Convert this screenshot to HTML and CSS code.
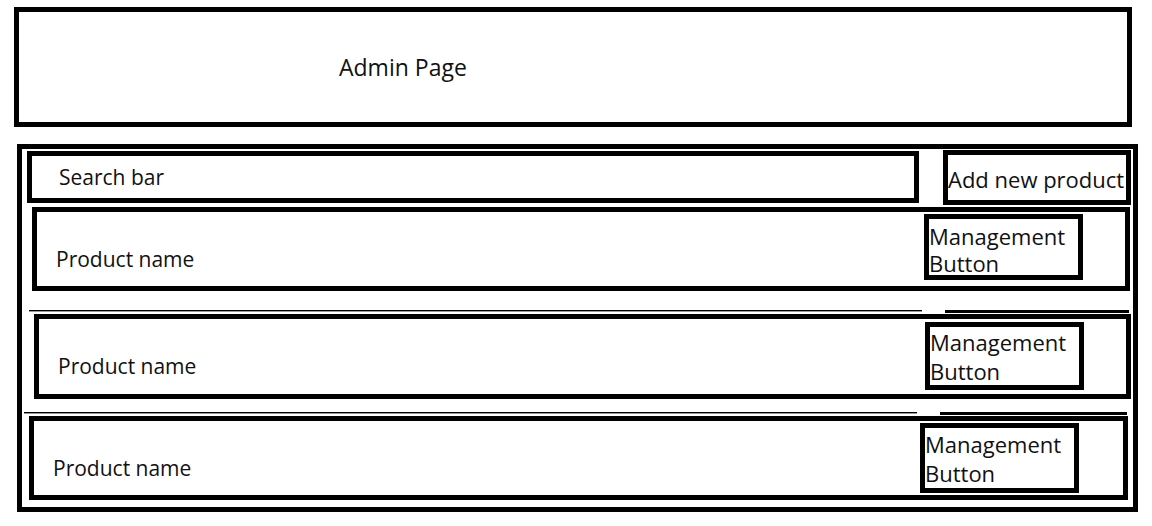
FILE: index.html
```html
<!DOCTYPE html>
<html lang="en">
<head>
<meta charset="utf-8">
<title>Admin Page</title>
<link rel="stylesheet" href="styles.css">
</head>
<body>
  <header class="header">
    <h1 class="header-title">Admin Page</h1>
  </header>
  <main class="panel">
    <div class="toolbar">
      <div class="search">Search bar</div>
      <button class="add-btn" type="button">Add new product</button>
    </div>
    <div class="row row--1">
      <span class="row-name">Product name</span>
      <button class="manage-btn manage-btn--1" type="button">Management Button</button>
    </div>
    <div class="divider divider--1">
      <span class="divider-thin"></span>
      <span class="divider-thick"></span>
    </div>
    <div class="row row--2">
      <span class="row-name">Product name</span>
      <button class="manage-btn manage-btn--2" type="button">Management Button</button>
    </div>
    <div class="divider divider--2">
      <span class="divider-thin"></span>
      <span class="divider-thick"></span>
    </div>
    <div class="row row--3">
      <span class="row-name">Product name</span>
      <button class="manage-btn manage-btn--3" type="button">Management Button</button>
    </div>
  </main>
</body>
</html>
```

FILE: styles.css
```css
* {
  box-sizing: border-box;
}

html, body {
  margin: 0;
  padding: 0;
  background: #ffffff;
}

body {
  width: 1152px;
  height: 526px;
  overflow: hidden;
  font-family: "Open Sans", "Liberation Sans", sans-serif;
  font-size: 21px;
  color: #111111;
}

button {
  font: inherit;
  color: inherit;
  background: #ffffff;
  text-align: left;
  cursor: pointer;
}

/* ---------- header ---------- */
.header {
  margin: 7px 20px 0 14px;
  height: 120px;
  border: 5px solid #000;
  display: flex;
  align-items: center;
  padding-left: 320px;
}

.header-title {
  margin: 0;
  font-size: 23px;
  font-weight: 400;
  line-height: 30px;
}

/* ---------- main panel ---------- */
.panel {
  margin: 17px 0 0 17px;
  width: 1121px;
  height: 368px;
  border: 5px solid #000;
  display: flex;
  flex-direction: column;
}

.toolbar {
  display: flex;
  align-items: flex-start;
  padding-left: 5px;
}

.search {
  margin-top: 2px;
  width: 892px;
  height: 52px;
  border: 5px solid #000;
  display: flex;
  align-items: center;
  padding-left: 27px;
  line-height: 28px;
}

.add-btn {
  margin: 1px 0 0 24px;
  width: 188px;
  height: 55px;
  border: 5px solid #000;
  padding: 3px 0 0 0;
  font-size: 22px;
  line-height: 28px;
  white-space: nowrap;
  overflow: hidden;
}

/* ---------- product rows ---------- */
.row {
  display: flex;
  align-items: flex-start;
  border: 5px solid #000;
}

.row--1 {
  margin: 2px 3px 0 10px;
  height: 84px;
}

.row--2 {
  margin: 1px 2px 0 12px;
  height: 85px;
}

.row--3 {
  margin: 1px 5px 0 7px;
  height: 84px;
}

.row-name {
  margin: 33px 0 0 19px;
  line-height: 28px;
}

.manage-btn {
  margin-left: auto;
  width: 159px;
  border: 5px solid #000;
  padding: 0;
  font-size: 22px;
  line-height: 29px;
  white-space: normal;
}

.manage-btn--1 {
  margin-top: 2px;
  margin-right: 42px;
  height: 66px;
  padding-top: 4px;
  line-height: 27px;
}

.manage-btn--2 {
  margin-top: 3px;
  margin-right: 42px;
  height: 68px;
  padding-top: 1px;
}

.manage-btn--3 {
  margin-top: 2px;
  margin-right: 44px;
  height: 70px;
  padding-top: 1px;
}

/* ---------- dividers ---------- */
.divider {
  display: flex;
  align-items: flex-start;
  height: 3px;
}

.divider--1 {
  margin-top: 19px;
  padding-left: 7px;
}

.divider--2 {
  margin-top: 13px;
  padding-left: 2px;
}

.divider-thin {
  width: 893px;
  height: 1px;
  background: #000;
  box-shadow: 0 1px 0 #9a9a9a;
}

.divider-thick {
  margin-left: 23px;
  width: 184px;
  height: 3px;
  background: #000;
}

.divider--2 .divider-thick {
  width: 187px;
}
```
